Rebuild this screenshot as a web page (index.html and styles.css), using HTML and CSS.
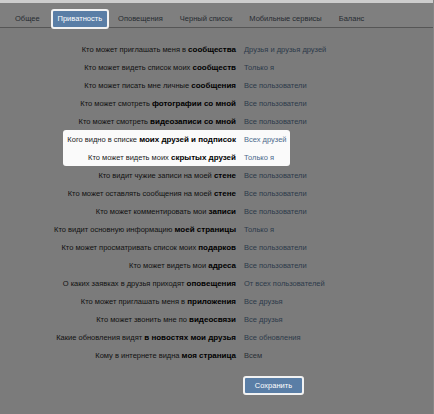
FILE: index.html
```html
<!DOCTYPE html>
<html lang="ru">
<head>
<meta charset="utf-8">
<title>Приватность</title>
<link rel="stylesheet" href="styles.css">
</head>
<body>
<div class="page">
  <div class="topstrip"></div>
  <nav class="tabs">
    <span class="tab">Общее</span>
    <span class="tab active">Приватность</span>
    <span class="tab">Оповещения</span>
    <span class="tab">Черный список</span>
    <span class="tab">Мобильные сервисы</span>
    <span class="tab">Баланс</span>
  </nav>
  <div class="settings">
    <div class="row"><div class="label">Кто может приглашать меня в <b>сообщества</b></div><div class="value">Друзья и друзья друзей</div></div>
    <div class="row"><div class="label">Кто может видеть список моих <b>сообществ</b></div><div class="value">Только я</div></div>
    <div class="row"><div class="label">Кто может писать мне личные <b>сообщения</b></div><div class="value">Все пользователи</div></div>
    <div class="row"><div class="label">Кто может смотреть <b>фотографии со мной</b></div><div class="value">Все пользователи</div></div>
    <div class="row"><div class="label">Кто может смотреть <b>видеозаписи со мной</b></div><div class="value">Все пользователи</div></div>
    <div class="highlight">
      <div class="row"><div class="label">Кого видно в списке <b>моих друзей и подписок</b></div><div class="value">Всех друзей</div></div>
      <div class="row"><div class="label">Кто может видеть моих <b>скрытых друзей</b></div><div class="value">Только я</div></div>
    </div>
    <div class="row"><div class="label">Кто видит чужие записи на моей <b>стене</b></div><div class="value">Все пользователи</div></div>
    <div class="row"><div class="label">Кто может оставлять сообщения на моей <b>стене</b></div><div class="value">Все пользователи</div></div>
    <div class="row"><div class="label">Кто может комментировать мои <b>записи</b></div><div class="value">Все пользователи</div></div>
    <div class="row"><div class="label">Кто видит основную информацию <b>моей страницы</b></div><div class="value">Только я</div></div>
    <div class="row"><div class="label">Кто может просматривать список моих <b>подарков</b></div><div class="value">Все пользователи</div></div>
    <div class="row"><div class="label">Кто может видеть мои <b>адреса</b></div><div class="value">Все пользователи</div></div>
    <div class="row"><div class="label">О каких заявках в друзья приходят <b>оповещения</b></div><div class="value">От всех пользователей</div></div>
    <div class="row"><div class="label">Кто может приглашать меня в <b>приложения</b></div><div class="value">Все друзья</div></div>
    <div class="row"><div class="label">Кто может звонить мне по <b>видеосвязи</b></div><div class="value">Все друзья</div></div>
    <div class="row"><div class="label">Какие обновления видят <b>в новостях мои друзья</b></div><div class="value">Все обновления</div></div>
    <div class="row"><div class="label">Кому в интернете видна <b>моя страница</b></div><div class="value plain">Всем</div></div>
  </div>
  <div class="actions">
    <button class="save">Сохранить</button>
  </div>
</div>
</body>
</html>
```
FILE: styles.css
```css
html, body {
  margin: 0;
  padding: 0;
}
body {
  background: #7b7b7b;
  font-family: "Liberation Sans", Arial, sans-serif;
  font-size: 7.5px;
  color: #111;
}
.page {
  width: 434px;
  height: 414px;
  overflow: hidden;
  border-right: 1px solid #868686;
  box-sizing: border-box;
}
.topstrip {
  height: 3px;
  background: #cdcdcd;
}
.tabs {
  display: flex;
  align-items: flex-end;
  height: 24px;
  padding-left: 7px;
  background: #7f7f7f;
  border-bottom: 1px solid #565656;
}
.tab {
  display: block;
  padding: 0 8px;
  line-height: 17px;
  height: 17px;
  margin-right: 1px;
  color: #262b31;
  white-space: nowrap;
}
.tab.active {
  height: 16px;
  line-height: 16px;
  padding: 0 5px;
  margin: 0 1px 0 2px;
  background: #5a7ea6;
  border: 2px solid #f2f2f2;
  border-radius: 3px;
  color: #fff;
  position: relative;
  top: 2px;
}
.settings {
  padding-top: 12px;
}
.row {
  display: flex;
  height: 18px;
  align-items: center;
  white-space: nowrap;
}
.label {
  width: 236px;
  text-align: right;
  flex: none;
}
.label b {
  color: #000;
  font-size: 8px;
}
.value {
  padding-left: 8px;
  color: #2c3a4a;
}
.value.plain {
  color: #2a2f36;
}
.highlight {
  margin-left: 63px;
  width: 227px;
  background: #fafafa;
  border-radius: 3px;
}
.highlight .label {
  width: 173px;
  color: #1a1a1a;
}
.highlight .value {
  color: #4c6a8c;
}
.actions {
  padding: 12px 0 0 243px;
}
.save {
  display: block;
  width: 61px;
  height: 19px;
  padding: 0;
  background: #5a7ea6;
  border: 2px solid #f2f2f2;
  border-radius: 3px;
  color: #fff;
  font-family: "Liberation Sans", Arial, sans-serif;
  font-size: 7.5px;
}
```
